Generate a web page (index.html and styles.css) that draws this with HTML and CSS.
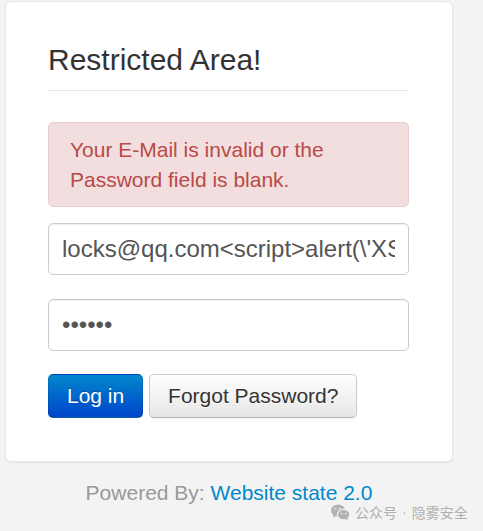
FILE: index.html
```html
<!DOCTYPE html>
<html lang="en">
<head>
<meta charset="utf-8">
<title>Restricted Area!</title>
<link rel="stylesheet" href="styles.css">
</head>
<body>
<div class="page">
  <div class="card">
    <h2 class="title">Restricted Area!</h2>
    <div class="alert">Your E-Mail is invalid or the Password field is blank.</div>
    <form class="form">
      <input class="field" type="text" value="locks@qq.com&lt;script&gt;alert(\'XSS\')&lt;/script&gt;">
      <input class="field" type="password" value="123456">
      <div class="actions"><button type="button" class="btn btn-primary">Log in</button> <button type="button" class="btn btn-default">Forgot Password?</button></div>
    </form>
  </div>
  <p class="footer">Powered By: <a class="footer-link" href="#">Website state 2.0</a></p>
</div>
<div class="watermark">
  <svg class="wm-icon" width="19" height="17" viewBox="0 0 19 17">
    <ellipse cx="7" cy="6.5" rx="7" ry="6" fill="#b3b3b3"/>
    <path d="M2.5 11 L1.8 13.8 L5 12.2 Z" fill="#b3b3b3"/>
    <ellipse cx="12.6" cy="10.6" rx="6.2" ry="5.3" fill="#b3b3b3" stroke="#f3f3f3" stroke-width="1.2"/>
    <path d="M16.2 14.6 L17 16.6 L14.4 15.4 Z" fill="#b3b3b3"/>
    <circle cx="4.6" cy="4.6" r="0.9" fill="#f3f3f3"/>
    <circle cx="9" cy="4.6" r="0.9" fill="#f3f3f3"/>
    <circle cx="10.6" cy="9.6" r="0.8" fill="#f3f3f3"/>
    <circle cx="14.6" cy="9.6" r="0.8" fill="#f3f3f3"/>
  </svg>
  <span class="wm-text">公众号</span>
  <span class="wm-dot">·</span>
  <span class="wm-text">隐雾安全</span>
</div>
</body>
</html>
```
FILE: styles.css
```css
html, body {
  margin: 0;
  padding: 0;
}
body {
  background: #f3f3f3;
  font-family: "Liberation Sans", Arial, sans-serif;
  color: #333;
}
.page {
  width: 448px;
  margin-left: 5px;
  padding-top: 1px;
}
.card {
  background: #fff;
  border: 1px solid #e7e7e7;
  border-radius: 6px;
  box-shadow: 0 1px 2px rgba(0, 0, 0, 0.06);
  padding: 41px 43px 43px 42px;
}
.title {
  margin: 0;
  font-size: 30px;
  font-weight: normal;
  line-height: 33px;
  color: #333;
  padding-bottom: 14px;
  border-bottom: 1px solid #e5e5e5;
}
.alert {
  margin: 31px 0 16px;
  padding: 12px 21px 11px;
  background: #f2dede;
  border: 1px solid #ebccd1;
  border-radius: 5px;
  color: #b94a48;
  font-size: 21px;
  line-height: 30px;
}
.form {
  margin: 0;
}
.field {
  display: block;
  box-sizing: border-box;
  width: 100%;
  height: 52px;
  margin: 0 0 24px;
  padding: 0 13px;
  border: 1px solid #ccc;
  border-radius: 5px;
  box-shadow: inset 0 1px 1px rgba(0, 0, 0, 0.075);
  background: #fff;
  font-family: "Liberation Sans", Arial, sans-serif;
  font-size: 24px;
  color: #555;
  outline: none;
}
.actions {
  margin-top: -1px;
  font-size: 21px;
  line-height: 30px;
}
.btn {
  display: inline-block;
  vertical-align: top;
  margin: 0;
  padding: 6px 18px;
  border-radius: 5px;
  font-family: "Liberation Sans", Arial, sans-serif;
  font-size: 21px;
  line-height: 30px;
  cursor: pointer;
}
.btn-primary {
  color: #fff;
  text-shadow: 0 -1px 0 rgba(0, 0, 0, 0.25);
  background: linear-gradient(to bottom, #0088cc, #0044cc);
  border: 1px solid rgba(0, 0, 0, 0.1);
  border-bottom-color: rgba(0, 0, 0, 0.25);
}
.btn-default {
  color: #333;
  text-shadow: 0 1px 1px rgba(255, 255, 255, 0.75);
  background: linear-gradient(to bottom, #ffffff, #e6e6e6);
  border: 1px solid #cccccc;
  border-bottom-color: #b3b3b3;
  box-shadow: inset 0 1px 0 rgba(255, 255, 255, 0.2), 0 1px 2px rgba(0, 0, 0, 0.05);
}
.footer {
  margin: 16px 0 0;
  text-align: center;
  font-size: 21px;
  line-height: 30px;
  color: #999;
}
.footer-link {
  color: #0088cc;
  text-decoration: none;
}
.watermark {
  position: absolute;
  left: 331px;
  top: 502px;
  display: flex;
  align-items: center;
  gap: 5px;
}
.wm-icon {
  display: block;
  margin-right: 0;
}
.wm-text {
  font-family: "Noto Sans CJK SC", sans-serif;
  font-size: 14px;
  line-height: 20px;
  color: #b0b0b0;
}
.wm-dot {
  font-family: "Liberation Sans", Arial, sans-serif;
  font-size: 14px;
  line-height: 20px;
  color: #b0b0b0;
}
```
